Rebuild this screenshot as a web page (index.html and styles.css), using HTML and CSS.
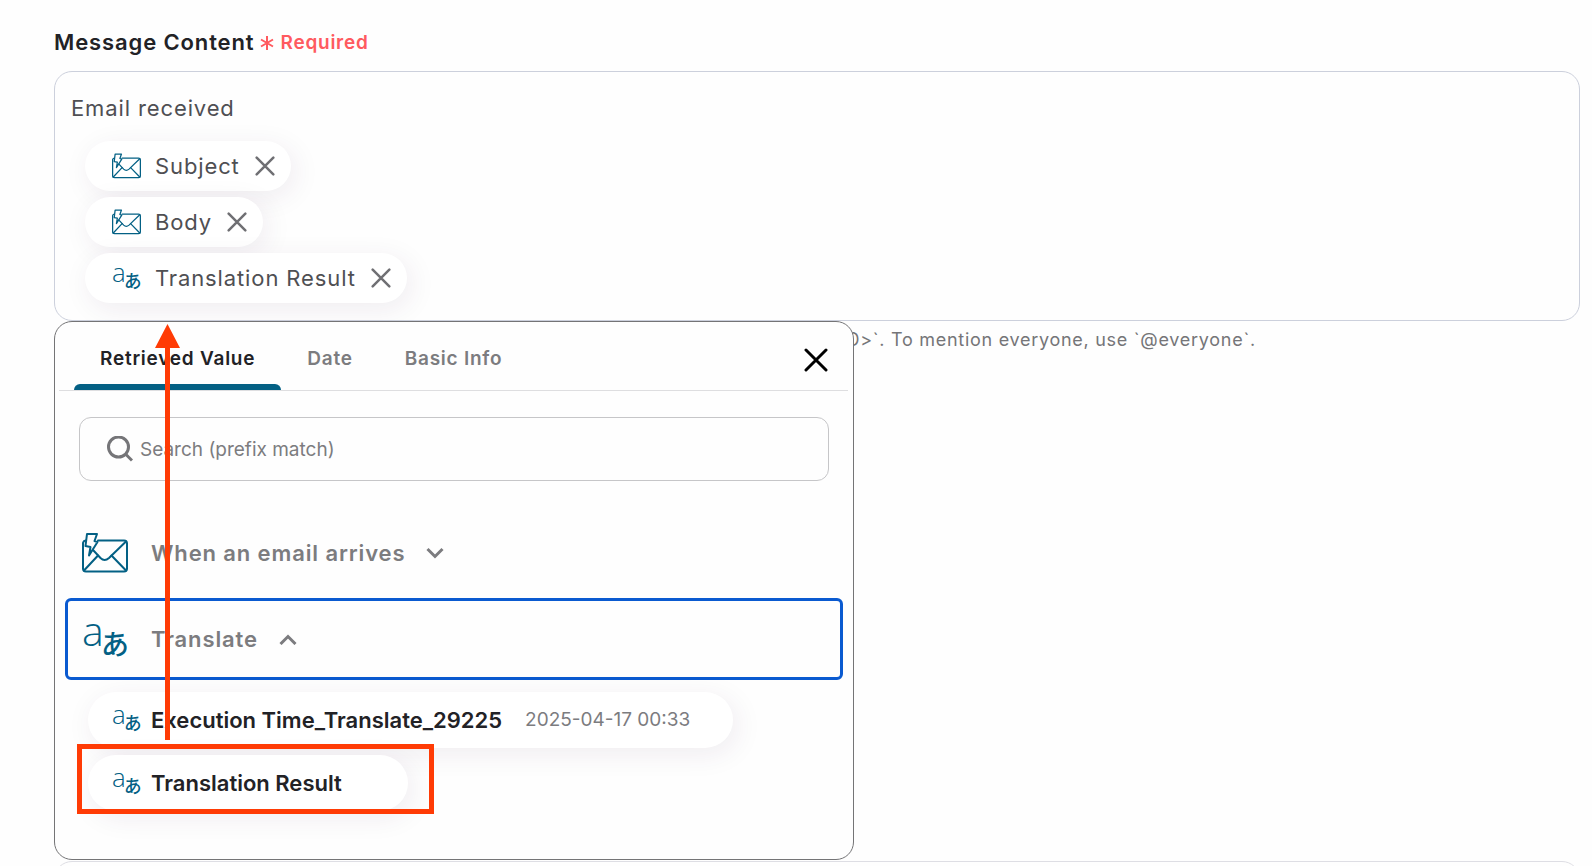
FILE: index.html
```html
<!DOCTYPE html>
<html lang="en">
<head>
    <meta charset="UTF-8">
    <meta name="viewport" content="width=device-width, initial-scale=1.0">
    <title>Message Content</title>
    <link rel="stylesheet" href="styles.css">
</head>
<body>

    <!-- Shared icons -->
    <svg class="sprite" aria-hidden="true">
        <symbol id="icon-mail" viewBox="0 0 46 40">
            <g fill="none" stroke="currentColor" stroke-linejoin="round" stroke-linecap="round">
                <path d="M16 7.500H42a3 3 0 0 1 3 3V35.500a3 3 0 0 1-3 3H4a3 3 0 0 1-3-3V10a3 3 0 0 1 2.500-2.500"/>
                <path d="M5 1H15L12.500 8L15.500 9L7 22.500L8.500 14L3.500 13Z"/>
                <path d="M11 17L18.500 25Q22.500 29 27 25L44 8.500"/>
                <path d="M16 22.500L2 37.500M29.500 22.500L44 37.500"/>
            </g>
        </symbol>
        <symbol id="icon-translate" viewBox="0 0 46 40">
            <text class="icon-latin" x="0" y="27">a</text>
            <text class="icon-kana" x="19" y="36">あ</text>
        </symbol>
        <symbol id="icon-close" viewBox="0 0 24 24">
            <path d="M2 2L22 22M22 2L2 22" fill="none" stroke="currentColor" stroke-linecap="round"/>
        </symbol>
    </svg>

    <div class="page">
        <div class="field-label">
            <span id="content-label" class="label-text">Message Content</span>
            <span class="required">
                <svg class="asterisk" viewBox="0 0 14 14"><path d="M7 0V14M1 3.500L13 10.500M13 3.500L1 10.500"/></svg>
                Required
            </span>
        </div>

        <div class="field">
            <!-- Message editor -->
            <div class="editor" role="textbox" aria-labelledby="content-label" contenteditable="true" spellcheck="false">
                <div class="editor-line">Email received</div>
                <div class="chips" contenteditable="false">
                    <span class="chip">
                        <svg class="chip-icon"><use href="#icon-mail"/></svg>
                        Subject
                        <button class="chip-remove" type="button" aria-label="Remove Subject"><svg><use href="#icon-close"/></svg></button>
                    </span>
                    <span class="chip">
                        <svg class="chip-icon"><use href="#icon-mail"/></svg>
                        Body
                        <button class="chip-remove" type="button" aria-label="Remove Body"><svg><use href="#icon-close"/></svg></button>
                    </span>
                    <span class="chip">
                        <svg class="chip-icon"><use href="#icon-translate"/></svg>
                        Translation Result
                        <button class="chip-remove" type="button" aria-label="Remove Translation Result"><svg><use href="#icon-close"/></svg></button>
                    </span>
                </div>
            </div>

            <!-- Value picker -->
            <div class="picker">
                <div class="picker-head">
                    <div class="tabs" role="tablist">
                        <button class="tab active" type="button" role="tab" aria-selected="true">Retrieved Value</button>
                        <button class="tab" type="button" role="tab">Date</button>
                        <button class="tab" type="button" role="tab">Basic Info</button>
                    </div>
                    <button class="picker-close" type="button" aria-label="Close"><svg><use href="#icon-close"/></svg></button>
                </div>

                <label class="search">
                    <svg class="search-icon" viewBox="0 0 26 26"><circle cx="11.500" cy="11" r="10"/><path d="M18.500 18L25 24.500"/></svg>
                    <input class="search-input" type="text" aria-label="Search" placeholder="Search (prefix match)">
                </label>

                <div class="groups">
                    <button class="group" type="button" aria-expanded="false">
                        <svg class="group-icon"><use href="#icon-mail"/></svg>
                        <span>When an email arrives</span>
                        <svg class="chevron" viewBox="0 0 18 12"><path d="M1.500 2L9 9.500L16.500 2"/></svg>
                    </button>
                    <button class="group focused" type="button" aria-expanded="true">
                        <svg class="group-icon"><use href="#icon-translate"/></svg>
                        <span>Translate</span>
                        <svg class="chevron" viewBox="0 0 18 12"><path d="M1.500 11L9 3.500L16.500 11"/></svg>
                    </button>
                </div>

                <div class="values">
                    <button class="value" type="button">
                        <svg class="chip-icon"><use href="#icon-translate"/></svg>
                        <span class="value-name">Execution Time_Translate_29225</span>
                        <span class="value-sample">2025-04-17 00:33</span>
                    </button>
                    <button class="value" type="button">
                        <svg class="chip-icon"><use href="#icon-translate"/></svg>
                        <span class="value-name">Translation Result</span>
                    </button>
                </div>

                <!-- Annotation: click here, value goes up there -->
                <div class="mark-box"></div>
                <svg class="mark-arrow" viewBox="0 0 26 416"><path d="M12.500 0L25 24H15V416H10V24H0Z"/></svg>
            </div>
        </div>

        <p class="help">To mention a member, use `&lt;@User ID&gt;`. To mention a role, use `&lt;@&amp;Role ID&gt;`. To mention everyone, use `@everyone`.</p>

        <div class="next-field"></div>
    </div>

</body>
</html>
```
FILE: styles.css
```css
* {
    box-sizing: border-box;
}

:root {
    --tracking: 0.04em;
}

body {
    margin: 0;
    font-family: Inter, "Noto Sans CJK JP", sans-serif;
    font-size: 22px;
    line-height: 32px;
    letter-spacing: var(--tracking);
    color: #4f4f53;
    background-color: #fefefe;
}

button,
input {
    font: inherit;
    color: inherit;
    letter-spacing: inherit;
    background: none;
    border: none;
    padding: 0;
}

button {
    cursor: pointer;
}

.sprite {
    display: none;
}

.page {
    height: 100vh;
    overflow: hidden;
    padding: 26px 12px 0 54px;
}

/* Label */
.field-label {
    display: flex;
    align-items: baseline;
    gap: 6px;
    height: 32px;
    margin-bottom: 13px;
}

.label-text {
    font-weight: 600;
    color: #222226;
}

.required {
    display: flex;
    align-items: center;
    gap: 6px;
    font-size: 19px;
    font-weight: 600;
    letter-spacing: var(--tracking);
    color: #ff5a5f;
}

.asterisk {
    width: 14px;
    height: 14px;
    overflow: visible;
    fill: none;
    stroke: currentColor;
    stroke-width: 2;
}

/* Editor */
.field {
    position: relative;
}

.editor {
    padding: 20px 16px 17px;
    border: 1px solid #ccd0dc;
    border-radius: 18px;
}

.chips {
    display: flex;
    flex-direction: column;
    align-items: flex-start;
    gap: 6px;
    margin: 17px 0 0 14px;
}

.chip {
    display: flex;
    align-items: center;
    height: 50px;
    padding: 0 16px 0 27px;
    border-radius: 25px;
    background-color: #fff;
    box-shadow: 4px 6px 28px rgba(60, 30, 80, 0.08);
}

.chip-icon {
    flex: none;
    width: 29px;
    height: 26px;
    margin-right: 14px;
    color: #036084;
    stroke-width: 2;
}

.chip-remove {
    display: flex;
    margin-left: 15px;
    color: #6f6f73;
}

.chip-remove svg {
    width: 20px;
    height: 20px;
    stroke-width: 3;
}

.icon-latin {
    font-family: "Open Sans", "Noto Sans", sans-serif;
    font-size: 41px;
    font-weight: 300;
    letter-spacing: normal;
    fill: currentColor;
    stroke: none;
}

.icon-kana {
    font-family: "Noto Sans CJK JP", sans-serif;
    font-size: 28px;
    font-weight: 500;
    letter-spacing: normal;
    fill: currentColor;
    stroke: none;
}

/* Picker */
.picker {
    position: absolute;
    top: 100%;
    left: 0;
    width: 800px;
    max-width: 100%;
    padding-bottom: 48px;
    border: 1px solid #747476;
    border-radius: 18px;
    background-color: #fefefe;
}

.picker-head {
    display: flex;
    justify-content: space-between;
    align-items: center;
    margin: 0 5px 0 4px;
    padding: 0 20px 0 15px;
    border-bottom: 1px solid #dedee0;
}

.tabs {
    display: flex;
}

.tab {
    padding: 25px 26px 13px;
    border-bottom: 6px solid transparent;
    font-size: 19px;
    font-weight: 600;
    line-height: 24px;
    letter-spacing: var(--tracking);
    color: #7c7c7f;
}

.tab.active {
    color: #222226;
    position: relative;
}

.tab.active::after {
    content: "";
    position: absolute;
    left: 0;
    right: 0;
    bottom: -6px;
    height: 6px;
    border-radius: 6px 6px 0 0;
    background-color: #036084;
}

.picker-close {
    display: flex;
    margin-top: 8px;
    color: #000;
}

.picker-close svg {
    width: 24px;
    height: 24px;
    stroke-width: 3;
}

.search {
    display: flex;
    align-items: center;
    gap: 7px;
    height: 64px;
    margin: 26px 24px 0;
    padding: 0 27px;
    border: 1px solid #c6c6c8;
    border-radius: 12px;
}

.search-icon {
    flex: none;
    width: 26px;
    height: 26px;
    fill: none;
    stroke: #757578;
    stroke-width: 3;
}

.search-input {
    flex: 1;
    min-width: 0;
    padding-top: 2px;
    font-size: 19px;
    letter-spacing: normal;
    outline: none;
}

.search-input::placeholder {
    color: #7c7c7f;
    opacity: 1;
}

.groups {
    display: flex;
    flex-direction: column;
    gap: 4px;
    margin: 31px 10px 0;
}

.group {
    display: flex;
    align-items: center;
    height: 82px;
    padding: 0 14px;
    border: 3px solid transparent;
    border-radius: 6px;
    font-weight: 600;
    color: #7c7c7f;
}

.group.focused {
    border-color: #0a5ad0;
}

.group-icon {
    width: 46px;
    height: 40px;
    margin-right: 23px;
    color: #036084;
    stroke-width: 2;
}

.chevron {
    width: 18px;
    height: 12px;
    margin-left: 21px;
    fill: none;
    stroke: currentColor;
    stroke-width: 3;
}

.values {
    display: flex;
    flex-direction: column;
    align-items: flex-start;
    gap: 7px;
    margin: 12px 0 0 33px;
}

.value {
    display: flex;
    align-items: center;
    height: 56px;
    padding: 0 43px 0 24px;
    border-radius: 28px;
    background-color: #fff;
    box-shadow: 4px 6px 28px rgba(60, 30, 80, 0.08);
    letter-spacing: normal;
}

.value .chip-icon {
    margin-right: 10px;
}

.value-name {
    margin-right: 23px;
    font-weight: 600;
    color: #222226;
}

.value-sample {
    font-size: 19px;
    color: #7c7c7f;
}

/* Annotation */
.mark-box {
    position: absolute;
    top: 422px;
    left: 22px;
    width: 357px;
    height: 70px;
    border: 5px solid #ff3b05;
    pointer-events: none;
}

.mark-arrow {
    position: absolute;
    top: 2px;
    left: 100px;
    width: 26px;
    height: 416px;
    fill: #ff3b05;
    pointer-events: none;
}

/* Help text and the field below */
.help {
    margin: 7px 0 0;
    padding-left: 98px;
    font-size: 18px;
    line-height: 24px;
    letter-spacing: var(--tracking);
    color: #757578;
}

.next-field {
    height: 250px;
    margin-top: 509px;
    border: 1px solid #dedee4;
    border-radius: 18px;
}
```
